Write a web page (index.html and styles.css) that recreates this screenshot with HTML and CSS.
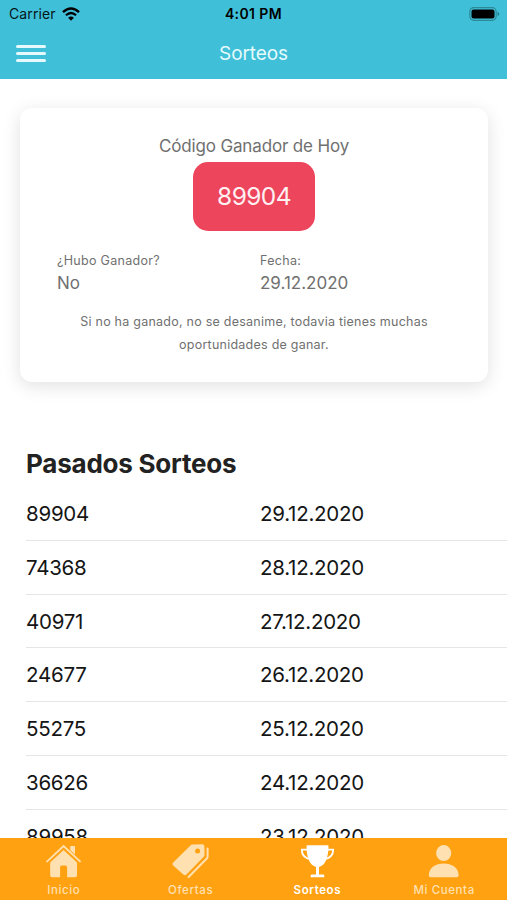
FILE: index.html
```html
<!DOCTYPE html>
<html lang="es">
<head>
    <meta charset="UTF-8">
    <meta name="viewport" content="width=device-width, initial-scale=1.0">
    <title>Sorteos</title>
    <link rel="stylesheet" href="styles.css">
</head>
<body>
    <div class="app">
        <header class="header">
            <div class="status">
                <div class="carrier">
                    <span>Carrier</span>
                    <svg class="wifi" viewBox="0 0 18 14">
                        <path d="M1 5.2Q9-2.2 17 5.2" fill="none" stroke="#000" stroke-width="2.5"/>
                        <path d="M3.9 8.3Q9 3.7 14.1 8.3" fill="none" stroke="#000" stroke-width="2.2"/>
                        <path d="M6.1 10.7Q9 8.3 11.9 10.7L9 13.7z"/>
                    </svg>
                </div>
                <div class="clock">4:01 PM</div>
                <svg class="battery" viewBox="0 0 31 14">
                    <rect x="0.8" y="0.7" width="26.4" height="12.6" rx="4" fill="none" stroke="#2b8998" stroke-width="1.2"/>
                    <rect x="2.5" y="2.5" width="23" height="9" rx="2"/>
                    <path d="M28.6 4.8q3.2 2.2 0 4.4z" fill="#24717f"/>
                </svg>
            </div>
            <nav class="navbar">
                <button class="menu" aria-label="Menu"><span></span><span></span><span></span></button>
                <h1>Sorteos</h1>
            </nav>
        </header>

        <main class="content">
            <section class="card">
                <p class="card-title">Código Ganador de Hoy</p>
                <div class="code">89904</div>
                <div class="info">
                    <div>
                        <p class="label">¿Hubo Ganador?</p>
                        <p class="value">No</p>
                    </div>
                    <div>
                        <p class="label">Fecha:</p>
                        <p class="value">29.12.2020</p>
                    </div>
                </div>
                <p class="note">Si no ha ganado, no se desanime, todavia tienes muchas oportunidades de ganar.</p>
            </section>

            <h2>Pasados Sorteos</h2>
            <ul class="list">
                <li><span>89904</span><span>29.12.2020</span></li>
                <li><span>74368</span><span>28.12.2020</span></li>
                <li><span>40971</span><span>27.12.2020</span></li>
                <li><span>24677</span><span>26.12.2020</span></li>
                <li><span>55275</span><span>25.12.2020</span></li>
                <li><span>36626</span><span>24.12.2020</span></li>
                <li><span>89958</span><span>23.12.2020</span></li>
            </ul>
        </main>

        <nav class="tabs">
            <a class="tab">
                <svg viewBox="0 0 36 36">
                    <path d="M2.2 18.4L18.6 3.1 35 18.4" fill="none" stroke="currentColor" stroke-width="1.9" stroke-linecap="round"/>
                    <path d="M25.2 3h4.8v8.4l-4.8-4.4z"/>
                    <path d="M5.2 19.4L18.6 7.1 32 19.4v12.8q0 2-2 2h-7.9v-10q0-1.8-1.8-1.8h-3.4q-1.8 0-1.8 1.8v10H7.2q-2 0-2-2z"/>
                </svg>
                <span>Inicio</span>
            </a>
            <a class="tab">
                <svg viewBox="0 0 37 36" class="tag">
                    <path fill-rule="evenodd" d="M20.5 1.6L30.2 1.2q2.1 0 2.2 2.1l.1 8.2q0 1.5-1 2.6L14.5 31.4q-1.6 1.6-3.2.1L1.2 22.6q-1.5-1.5 0-3.2L18.2 2.7q1-1 2.3-1.1zM25.6 5.5a2.5 2.5 0 1 0 0 5 2.5 2.5 0 1 0 0-5z"/>
                    <path d="M35.6 5.5v7.9q0 1.4-1 2.4L16.6 34" fill="none" stroke="currentColor" stroke-width="2" stroke-linecap="round"/>
                </svg>
                <span>Ofertas</span>
            </a>
            <a class="tab active">
                <svg viewBox="0 0 36 36">
                    <path d="M9 6.6H2.8Q2.8 14.8 11.5 16.2M28 6.6h6.2Q34.2 14.8 25.5 16.2" fill="none" stroke="currentColor" stroke-width="1.8"/>
                    <path d="M8.4 2.2h20.2q1 0 .9 1.1-.2 18-9.5 20.7v7.6h4.1q1.2 0 1.2 1.2v1.4H11.7v-1.4q0-1.2 1.2-1.2H17v-7.6Q7.7 21.3 7.5 3.3q-.1-1.1.9-1.1z"/>
                </svg>
                <span>Sorteos</span>
            </a>
            <a class="tab">
                <svg viewBox="0 0 36 36">
                    <ellipse cx="17.7" cy="10.1" rx="7.6" ry="8"/>
                    <path d="M2.8 32.4C2.8 24.6 9.6 20.6 17.7 20.6s14.9 4 14.9 11.8q0 1.8-1.8 1.8H4.6q-1.8 0-1.8-1.8z"/>
                </svg>
                <span>Mi Cuenta</span>
            </a>
        </nav>
    </div>
</body>
</html>
```
FILE: styles.css
```css
* {
    box-sizing: border-box;
    margin: 0;
    padding: 0;
}
body {
    font-family: Inter, "Liberation Sans", sans-serif;
    background: #fff;
    color: #151515;
}
.app {
    display: flex;
    flex-direction: column;
    height: 900px;
    overflow: hidden;
}

/* header */
.header {
    flex: none;
    height: 79px;
    background: #40c0d8;
}
.status {
    display: grid;
    grid-template-columns: 1fr auto 1fr;
    align-items: center;
    height: 27px;
    padding: 0 7px 0 9px;
    font-size: 14px;
    color: #06161a;
}
.carrier {
    display: flex;
    align-items: center;
    gap: 6px;
    letter-spacing: 0.1px;
}
.wifi {
    width: 18px;
    height: 14px;
}
.clock {
    margin-right: 2px;
    font-weight: 600;
    letter-spacing: 0.4px;
    color: #000;
}
.battery {
    width: 31px;
    height: 14px;
    justify-self: end;
}
.navbar {
    display: grid;
    grid-template-columns: 1fr auto 1fr;
    align-items: center;
    height: 52px;
    padding: 0 16px;
}
.menu {
    display: flex;
    flex-direction: column;
    gap: 4px;
    width: 30px;
    background: none;
    border: none;
}
.menu span {
    height: 3px;
    border-radius: 2px;
    background: #e6fafd;
}
.navbar h1 {
    font-size: 19px;
    font-weight: 400;
    letter-spacing: -0.1px;
    line-height: 22px;
    padding-top: 1px;
    color: #e6fafd;
}

/* winner card */
.content {
    flex: 1;
    min-height: 0;
    overflow: hidden;
    padding-top: 29px;
}
.card {
    height: 274px;
    margin: 0 19px 0 20px;
    padding: 26px 37px 0;
    border-radius: 12px;
    background: #fff;
    box-shadow: 0 4px 18px rgba(0, 0, 0, 0.12);
    color: #707070;
    text-align: center;
}
.card-title {
    font-size: 17px;
    line-height: 24px;
    letter-spacing: -0.15px;
}
.code {
    width: 122px;
    height: 69px;
    margin: 4px auto 0;
    border-radius: 15px;
    background: #ed455c;
    color: #fff0f2;
    font-size: 24.5px;
    line-height: 69px;
    letter-spacing: -0.6px;
}
.info {
    display: grid;
    grid-template-columns: 203px 1fr;
    margin-top: 20px;
    text-align: left;
}
.label {
    font-size: 12.5px;
    line-height: 20px;
    letter-spacing: 0.3px;
}
.value {
    font-size: 17px;
    line-height: 24px;
}
.note {
    margin-top: 15px;
    font-size: 12.5px;
    line-height: 23px;
    letter-spacing: 0.24px;
}

/* past draws */
h2 {
    margin: 63px 0 0 26px;
    font-size: 26px;
    line-height: 37px;
    font-weight: 700;
    letter-spacing: -0.22px;
    color: #222;
}
.list {
    margin: 5px 0 0 26px;
    list-style: none;
}
.list li {
    display: grid;
    grid-template-columns: 234px 1fr;
    height: 53.75px;
    border-bottom: 1px solid #e6e6e6;
    font-size: 20.5px;
    line-height: 54px;
    letter-spacing: -0.25px;
}

/* bottom tabs */
.tabs {
    display: grid;
    grid-template-columns: repeat(4, 1fr);
    flex: none;
    height: 62px;
    background: #ffa111;
}
.tab {
    display: flex;
    flex-direction: column;
    align-items: center;
    padding-top: 5px;
    font-size: 11.5px;
    font-weight: 500;
    letter-spacing: 0.6px;
    color: #ffe0b0;
}
.tab svg {
    width: 36px;
    height: 36px;
    fill: currentColor;
}
.tab .tag {
    width: 37px;
}
.tab span {
    padding-left: 1px;
    line-height: 22px;
}
.tab.active {
    color: #fff;
    font-weight: 600;
}
```
